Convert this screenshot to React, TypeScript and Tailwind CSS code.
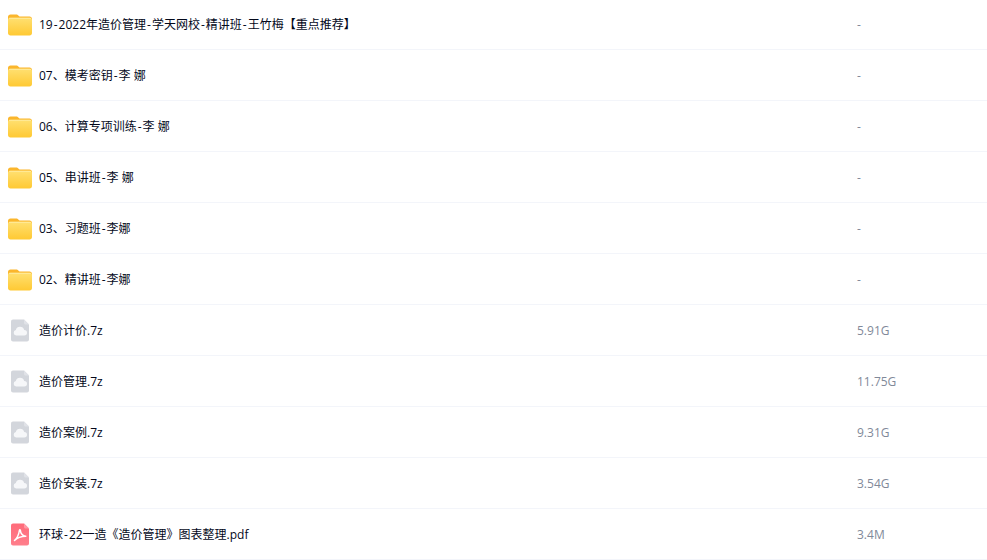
import { Fragment } from "react";

const rows: { name: string; size: string; icon: "folder" | "file" | "pdf" }[] = [
  { name: "19-2022年造价管理-学天网校-精讲班-王竹梅【重点推荐】", size: "-", icon: "folder" },
  { name: "07、模考密钥-李 娜", size: "-", icon: "folder" },
  { name: "06、计算专项训练-李 娜", size: "-", icon: "folder" },
  { name: "05、串讲班-李 娜", size: "-", icon: "folder" },
  { name: "03、习题班-李娜", size: "-", icon: "folder" },
  { name: "02、精讲班-李娜", size: "-", icon: "folder" },
  { name: "造价计价.7z", size: "5.91G", icon: "file" },
  { name: "造价管理.7z", size: "11.75G", icon: "file" },
  { name: "造价案例.7z", size: "9.31G", icon: "file" },
  { name: "造价安装.7z", size: "3.54G", icon: "file" },
  { name: "环球-22一造《造价管理》图表整理.pdf", size: "3.4M", icon: "pdf" },
];

function FolderIcon() {
  return (
    <svg width="26" height="24" viewBox="0 0 26 24" className="shrink-0">
      <defs>
        <linearGradient id="fg" x1="0" y1="0" x2="0" y2="1">
          <stop offset="0" stopColor="#ffe071" />
          <stop offset="1" stopColor="#ffc933" />
        </linearGradient>
      </defs>
      <path d="M1 4C1 2.5 2 1.5 3.5 1.5h5.5c1.2 0 1.8.4 2.6 1.2l.9.9H22.5C24 3.6 25 4.6 25 6V8H1z" fill="#fbb62c" />
      <path d="M1 7C1 5.6 2 4.8 3.5 4.8H22.5C24 4.8 25 5.6 25 7V20C25 21.6 24 22.5 22.5 22.5H3.5C2 22.5 1 21.6 1 20z" fill="url(#fg)" />
      <rect x="2" y="4.8" width="22" height="1" fill="#ffeb9e" />
    </svg>
  );
}

function FileIcon() {
  return (
    <svg width="26" height="24" viewBox="0 0 26 24" className="shrink-0">
      <path d="M6 0.5H17L22 5.5V20.5C22 21.6 21.1 22.5 20 22.5H6C4.9 22.5 4 21.6 4 20.5V2.5C4 1.4 4.9 0.5 6 0.5Z" fill="#d3d6dc" />
      <path d="M17 0.5L22 5.5H18.5C17.7 5.5 17 4.8 17 4Z" fill="#e0e2e7" />
      <path d="M9.2 16.5a2.8 2.8 0 0 1-.4-5.5 4.4 4.4 0 0 1 8.4-.1 2.8 2.8 0 0 1 0 5.6z" fill="#f6f7f9" />
    </svg>
  );
}

function PdfIcon() {
  return (
    <svg width="26" height="24" viewBox="0 0 26 24" className="shrink-0">
      <defs>
        <linearGradient id="pg" x1="0" y1="0" x2="0" y2="1">
          <stop offset="0" stopColor="#ff6b7a" />
          <stop offset="1" stopColor="#ff7f8c" />
        </linearGradient>
      </defs>
      <path d="M6 0.5H17L22 5.5V20.5C22 21.6 21.1 22.5 20 22.5H6C4.9 22.5 4 21.6 4 20.5V2.5C4 1.4 4.9 0.5 6 0.5Z" fill="url(#pg)" />
      <path d="M17 0.5L22 5.5H18.5C17.7 5.5 17 4.8 17 4Z" fill="#ff9aa5" />
      <path d="M7.5 17.5C9.8 15.5 11.8 11.5 12.4 7.5C12.6 6.5 13.4 6.5 13.4 7.5C13.5 10 15.5 13 18.8 13.2C15.5 13.2 10.5 14.5 7.5 17.5Z" fill="none" stroke="#ffffff" strokeWidth="1.5" strokeLinejoin="round" />
    </svg>
  );
}

function Name({ text }: { text: string }) {
  const parts = text.split("-");
  return (
    <span>
      {parts.map((p, i) => (
        <Fragment key={i}>
          {i > 0 && <span className="px-px">-</span>}
          {p}
        </Fragment>
      ))}
    </span>
  );
}

export default function App() {
  return (
    <div className="h-[560px] w-[987px] overflow-hidden bg-white font-['Open_Sans','Noto_Sans_CJK_SC',sans-serif] text-xs text-[#03081a]">
      <div className="-mt-px">
        {rows.map((r) => (
          <div key={r.name} className="flex h-[51px] items-center border-b border-[#f3f5fa] pt-px">
            <div className="flex w-[857px] items-center gap-[6px] pl-[7px]">
              {r.icon === "folder" ? <FolderIcon /> : r.icon === "file" ? <FileIcon /> : <PdfIcon />}
              <Name text={r.name} />
            </div>
            <span className="text-[#818999]">{r.size}</span>
          </div>
        ))}
      </div>
    </div>
  );
}
